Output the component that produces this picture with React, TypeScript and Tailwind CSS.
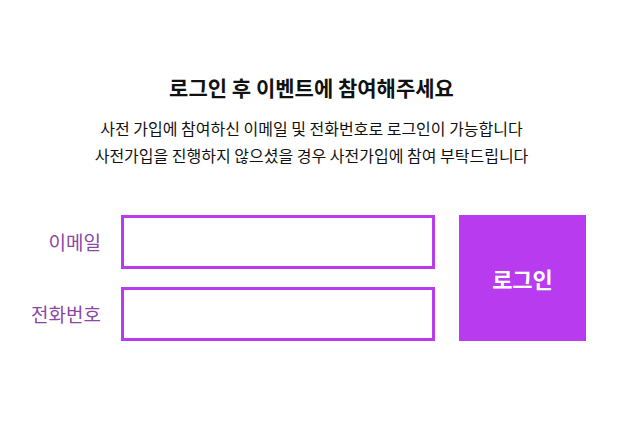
export default function App() {
  return (
    <div
      className="min-h-screen w-full bg-white text-[#111]"
      style={{ fontFamily: '"Noto Sans CJK KR", "Noto Sans", sans-serif' }}
    >
      {/* Heading */}
      <div className="flex flex-col items-center pt-[73px]">
        <h1 className="text-[21px] leading-[28px] font-bold">로그인 후 이벤트에 참여해주세요</h1>
        <div className="mt-[14px] text-center text-[16px] leading-[27px]">
          <p>사전 가입에 참여하신 이메일 및 전화번호로 로그인이 가능합니다</p>
          <p>사전가입을 진행하지 않으셨을 경우 사전가입에 참여 부탁드립니다</p>
        </div>
      </div>

      {/* Login form */}
      <div className="mt-[46px] flex pl-[21px]">
        <div className="flex flex-col gap-[18px]">
          <div className="flex items-center gap-[20px]">
            <label className="w-[80px] text-right text-[19px] text-[#8b47a8]">이메일</label>
            <input className="h-[54px] w-[314px] border-[3px] border-[#b93bef] outline-none px-3" />
          </div>
          <div className="flex items-center gap-[20px]">
            <label className="w-[80px] text-right text-[19px] text-[#8b47a8]">전화번호</label>
            <input className="h-[54px] w-[314px] border-[3px] border-[#b93bef] outline-none px-3" />
          </div>
        </div>
        <button className="ml-[24px] flex h-[126px] w-[127px] items-center justify-center bg-[#b93bef] text-[22px] font-bold text-white">
          로그인
        </button>
      </div>
    </div>
  );
}
